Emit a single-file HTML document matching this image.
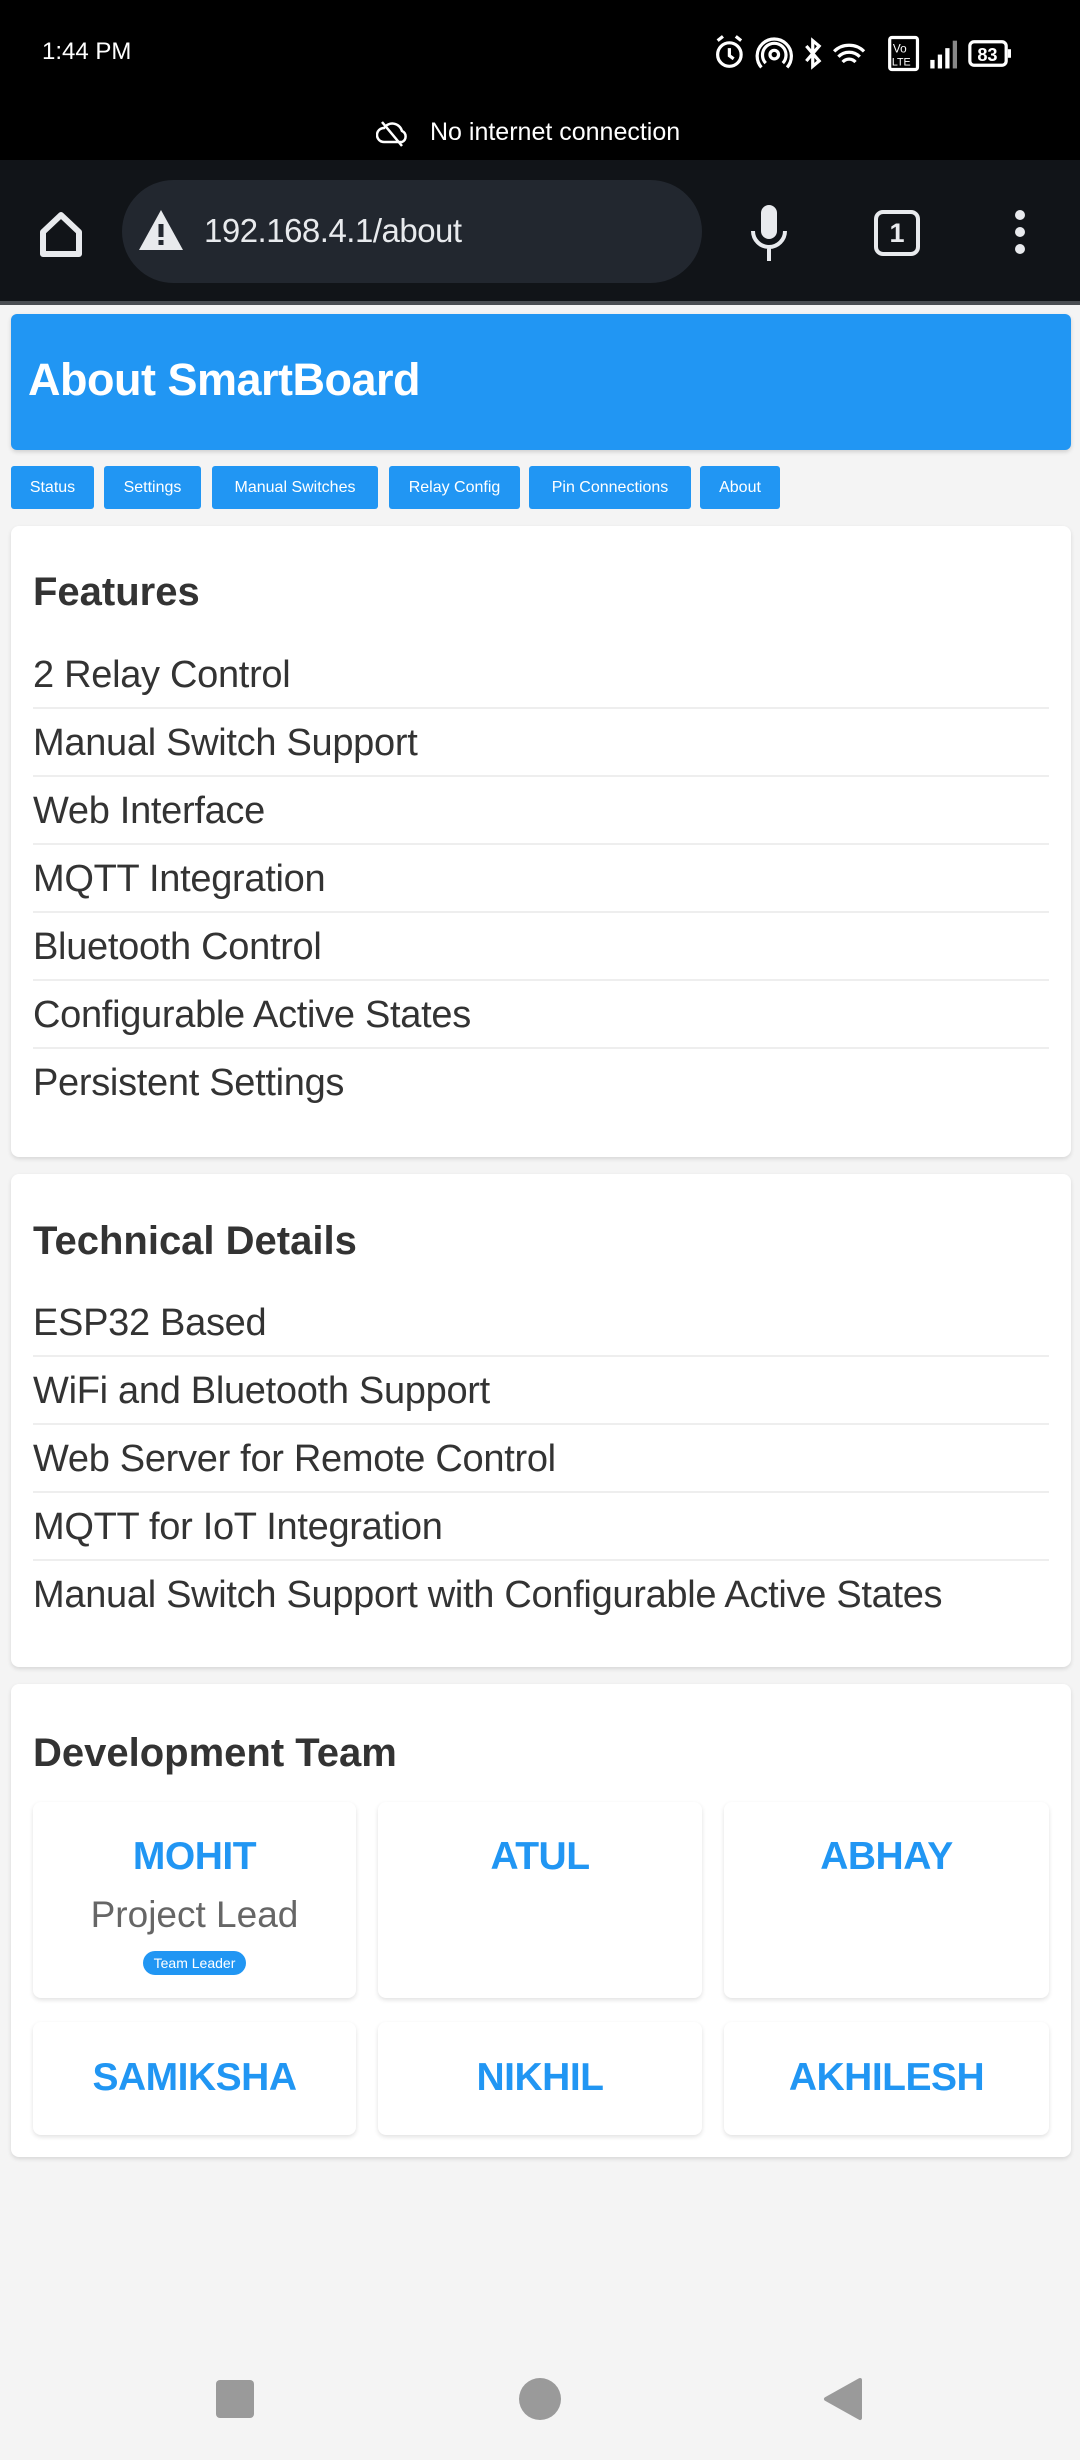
<!DOCTYPE html>
<html><head><meta charset="utf-8">
<style>
*{margin:0;padding:0;box-sizing:border-box}
body{width:1080px;height:2460px;background:#f4f4f4;font-family:"Liberation Sans",Arial,sans-serif;position:relative;overflow:hidden;color:#333}
.abs{position:absolute}
.sb{left:0;top:0;width:1080px;height:160px;background:#000;color:#fff}
.tb{left:0;top:160px;width:1080px;height:141px;background:#111418}
.line{left:0;top:301px;width:1080px;height:4px;background:#4a4d52}
.omni{left:122px;top:180px;width:580px;height:103px;border-radius:52px;background:#22272f}
.hdr{left:11px;top:314px;width:1060px;height:136px;background:#2196f3;border-radius:6px;box-shadow:0 2px 4px rgba(0,0,0,.15)}
.hdr span{position:absolute;left:17px;top:40px;color:#fff;font-weight:bold;font-size:45px;letter-spacing:-0.5px}
.btn{top:466px;height:43px;background:#2196f3;color:#fff;font-size:16px;border-radius:3px;text-align:center;line-height:43px}
.card{left:11px;width:1060px;background:#fff;border-radius:8px;box-shadow:0 2px 4px rgba(0,0,0,.12)}
.card h2{position:absolute;left:22px;font-size:40px;font-weight:bold;color:#333}
.item{position:absolute;left:22px;width:1016px;height:68px;font-size:38px;line-height:68px;color:#333;border-bottom:2px solid #eee;letter-spacing:-0.3px}
.item.last{border-bottom:none}
.tm{background:#fff;border-radius:8px;box-shadow:0 2px 5px rgba(0,0,0,.12);text-align:center}
.tm b{position:absolute;left:0;width:100%;font-size:39px;color:#2196f3;letter-spacing:-0.5px}
</style></head><body>
<div class="abs sb">
  <div class="abs" style="left:42px;top:38px;font-size:24px">1:44 PM</div>
  <svg class="abs" style="left:708px;top:32px" width="342" height="43" viewBox="0 0 320 40">
    <g fill="none" stroke="#fff" stroke-width="3">
      <circle cx="20" cy="21" r="11"/><path d="M20 15v7l4 3M9 8l5-4M31 8l-5-4"/>
      <circle cx="62" cy="21" r="4"/><path d="M54 29a11 11 0 1 1 16 0M50 33a16 16 0 1 1 24 0"/>
      <path d="M92 13l12 14-6 5V8l6 5-12 14"/>
      <path d="M118 18a20 20 0 0 1 28 0M122 23a14 14 0 0 1 20 0M126 28a8 8 0 0 1 12 0"/>
      <rect x="170" y="5" width="26" height="30" rx="2"/>
      <rect x="245" y="9" width="34" height="22" rx="4"/><path d="M282 16v8"/>
    </g>
    <text x="173" y="19" font-size="11" fill="#fff" font-family="Liberation Sans">Vo</text>
    <text x="172" y="31" font-size="10" fill="#fff" font-family="Liberation Sans">LTE</text>
    <g fill="#fff"><rect x="208" y="26" width="4" height="8"/><rect x="215" y="21" width="4" height="13"/><rect x="222" y="15" width="4" height="19"/><rect x="229" y="8" width="4" height="26" fill="#888"/></g>
    <text x="252" y="27" font-size="17" font-weight="bold" fill="#fff" font-family="Liberation Sans">83</text>
  </svg>
  <svg class="abs" style="left:376px;top:118px" width="34" height="30" viewBox="0 0 34 30"><path d="M8 24a7 7 0 0 1 0-14 10 10 0 0 1 18 3 6 6 0 0 1 0 11zM6 4l20 24" fill="none" stroke="#fff" stroke-width="2.5"/></svg>
  <div class="abs" style="left:430px;top:118px;font-size:25px">No internet connection</div>
</div>
<div class="abs tb"></div>
<div class="abs line"></div>
<svg class="abs" style="left:38px;top:210px" width="46" height="48" viewBox="0 0 46 48"><path d="M5 22L23 5l18 17v22H5z" fill="none" stroke="#e8eaed" stroke-width="6" stroke-linejoin="round"/></svg>
<div class="abs omni"></div>
<svg class="abs" style="left:137px;top:208px" width="48" height="44" viewBox="0 0 48 44"><path d="M24 2L46 42H2z" fill="#e8eaed"/><rect x="21.5" y="16" width="5" height="13" fill="#22272f"/><rect x="21.5" y="32" width="5" height="5" fill="#22272f"/></svg>
<div class="abs" style="left:204px;top:212px;font-size:33px;color:#e8eaed;letter-spacing:-0.5px">192.168.4.1/about</div>
<svg class="abs" style="left:748px;top:203px" width="42" height="60" viewBox="0 0 42 60"><rect x="13" y="2" width="16" height="34" rx="8" fill="#e8eaed"/><path d="M5 28a16 16 0 0 0 32 0M21 44v14" fill="none" stroke="#e8eaed" stroke-width="4"/></svg>
<div class="abs" style="left:874px;top:210px;width:46px;height:46px;border:4px solid #e8eaed;border-radius:9px;color:#e8eaed;font-size:27px;font-weight:bold;text-align:center;line-height:38px">1</div>
<svg class="abs" style="left:1010px;top:208px" width="20" height="50" viewBox="0 0 20 50"><g fill="#e8eaed"><circle cx="10" cy="7" r="5"/><circle cx="10" cy="24" r="5"/><circle cx="10" cy="41" r="5"/></g></svg>

<div class="abs hdr"><span>About SmartBoard</span></div>
<div class="abs btn" style="left:11px;width:83px">Status</div>
<div class="abs btn" style="left:104px;width:97px">Settings</div>
<div class="abs btn" style="left:212px;width:166px">Manual Switches</div>
<div class="abs btn" style="left:389px;width:131px">Relay Config</div>
<div class="abs btn" style="left:529px;width:162px">Pin Connections</div>
<div class="abs btn" style="left:700px;width:80px">About</div>

<div class="abs card" style="top:526px;height:631px">
  <h2 style="top:44px">Features</h2>
  <div class="item" style="top:115px">2 Relay Control</div>
  <div class="item" style="top:183px">Manual Switch Support</div>
  <div class="item" style="top:251px">Web Interface</div>
  <div class="item" style="top:319px">MQTT Integration</div>
  <div class="item" style="top:387px">Bluetooth Control</div>
  <div class="item" style="top:455px">Configurable Active States</div>
  <div class="item last" style="top:523px">Persistent Settings</div>
</div>

<div class="abs card" style="top:1174px;height:493px">
  <h2 style="top:45px">Technical Details</h2>
  <div class="item" style="top:115px">ESP32 Based</div>
  <div class="item" style="top:183px">WiFi and Bluetooth Support</div>
  <div class="item" style="top:251px">Web Server for Remote Control</div>
  <div class="item" style="top:319px">MQTT for IoT Integration</div>
  <div class="item last" style="top:387px">Manual Switch Support with Configurable Active States</div>
</div>

<div class="abs card" style="top:1684px;height:473px">
  <h2 style="top:47px">Development Team</h2>
</div>
<div class="abs tm" style="left:33px;top:1802px;width:323px;height:196px"><b style="top:33px">MOHIT</b>
  <div class="abs" style="left:0;width:100%;top:92px;font-size:37px;color:#666">Project Lead</div>
  <div class="abs" style="left:110px;top:149px;width:103px;height:24px;border-radius:12px;background:#2196f3;color:#fff;font-size:14px;line-height:24px">Team Leader</div></div>
<div class="abs tm" style="left:378px;top:1802px;width:324px;height:196px"><b style="top:33px">ATUL</b></div>
<div class="abs tm" style="left:724px;top:1802px;width:325px;height:196px"><b style="top:33px">ABHAY</b></div>
<div class="abs tm" style="left:33px;top:2022px;width:323px;height:113px"><b style="top:34px">SAMIKSHA</b></div>
<div class="abs tm" style="left:378px;top:2022px;width:324px;height:113px"><b style="top:34px">NIKHIL</b></div>
<div class="abs tm" style="left:724px;top:2022px;width:325px;height:113px"><b style="top:34px">AKHILESH</b></div>

<div class="abs" style="left:216px;top:2380px;width:38px;height:38px;background:#9a9a9a;border-radius:4px"></div>
<div class="abs" style="left:519px;top:2378px;width:42px;height:42px;background:#9a9a9a;border-radius:50%"></div>
<svg class="abs" style="left:822px;top:2377px" width="42" height="44" viewBox="0 0 42 44"><path d="M38 3L4 22l34 19z" fill="#9a9a9a" stroke="#9a9a9a" stroke-width="4" stroke-linejoin="round"/></svg>
</body></html>
